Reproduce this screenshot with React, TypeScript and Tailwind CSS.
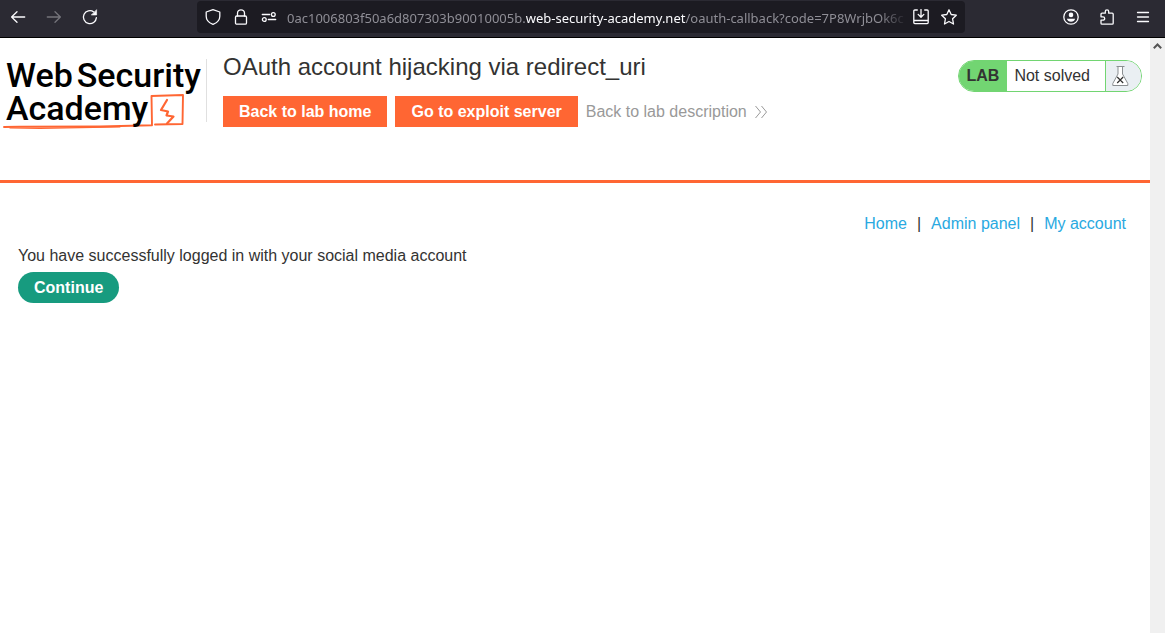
import type { ReactNode } from "react";

function Icon({ size = 16, children }: { size?: number; children: ReactNode }) {
  return (
    <svg
      width={size}
      height={size}
      viewBox="0 0 16 16"
      fill="none"
      stroke="currentColor"
      strokeWidth="1.3"
      strokeLinecap="round"
      strokeLinejoin="round"
      aria-hidden="true"
      className="block"
    >
      {children}
    </svg>
  );
}

function ToolButton({ label, children, disabled }: { label: string; children: ReactNode; disabled?: boolean }) {
  return (
    <button
      type="button"
      aria-label={label}
      disabled={disabled}
      className="flex size-5 shrink-0 items-center justify-center text-[#fbfbfe] disabled:text-[#75747b]"
    >
      {children}
    </button>
  );
}

function BrowserBar() {
  return (
    <div className="flex h-[38px] shrink-0 items-start border-b border-black bg-[#2b2a33] pt-px">
      <div className="flex h-8 w-[197px] shrink-0 items-center gap-4 pl-2">
        <ToolButton label="Back">
          <Icon>
            <path d="M14.7 8H1.6M7 2.8 1.6 8 7 13.2" />
          </Icon>
        </ToolButton>
        <ToolButton label="Forward" disabled>
          <Icon>
            <path d="M1.3 8h13.1M9 2.8 14.4 8 9 13.2" />
          </Icon>
        </ToolButton>
        <ToolButton label="Reload">
          <Icon>
            <path d="M14.4 8.6A6.5 6.5 0 1 1 11.8 2.9" />
            <path d="M14.6 1v5H9.6Z" fill="currentColor" strokeWidth="0.6" />
          </Icon>
        </ToolButton>
      </div>
      <div className="flex h-8 min-w-0 flex-1 items-center rounded bg-[#1c1b22] pr-[6px] pl-[6px]">
        <div className="flex shrink-0 items-center gap-2">
          <ToolButton label="Tracking protection">
            <Icon>
              <path d="M8 .7 14.8 3v4.2c0 3.6-2.8 6.6-6.8 8.2-4-1.6-6.8-4.600-6.800-8.200V3Z" />
            </Icon>
          </ToolButton>
          <ToolButton label="Connection is secure">
            <Icon>
              <rect x="2.500" y="7" width="11" height="8.200" rx="1.300" />
              <path d="M4.500 7V4.300a3.500 3.500 0 0 1 7 0V7" />
            </Icon>
          </ToolButton>
          <ToolButton label="Site permissions">
            <Icon>
              <path d="M1.300 5.500h7.400M7.300 10.500h7.400" />
              <circle cx="12.300" cy="5.500" r="1.900" />
              <circle cx="3.300" cy="10.500" r="1.900" />
            </Icon>
          </ToolButton>
        </div>
        <div
          aria-label="Address"
          className="ml-2 min-w-0 flex-1 overflow-hidden mask-[linear-gradient(to_right,black_calc(100%-28px),transparent)] pt-[2px] font-['Noto_Sans',sans-serif] text-[13px] leading-5 whitespace-nowrap text-[#8f8e96]"
        >
          0ac1006803f50a6d807303b90010005b.<span className="text-[#fbfbfe]">web-security-academy.net</span>
          /oauth-callback?code=7P8WrjbOk6c
        </div>
        <div className="flex shrink-0 items-center gap-2 pl-1">
          <ToolButton label="Install site">
            <Icon>
              <path d="M4.300 1H1.800a1 1 0 0 0-1 1v11.600a1 1 0 0 0 1 1h12.400a1 1 0 0 0 1-1V2a1 1 0 0 0-1-1h-2.500M.8 11.500h14.400M8 .5v7.300M5.200 5.400 8 8.200l2.800-2.800" />
            </Icon>
          </ToolButton>
          <ToolButton label="Bookmark this page">
            <Icon>
              <path d="m8 .8 2.200 4.700 5.100.7-3.700 3.600.9 5.200L8 12.500 3.500 15l.9-5.200L.7 6.200l5.100-.7Z" />
            </Icon>
          </ToolButton>
        </div>
      </div>
      <div className="flex h-8 w-[200px] shrink-0 items-center justify-end gap-4 pr-3">
        <ToolButton label="Account">
          <Icon>
            <circle cx="8" cy="8" r="7.200" />
            <circle cx="8" cy="5.900" r="2.300" fill="currentColor" stroke="none" />
            <path d="M3.900 9.800h8.200c-.4 2-2 3-4.100 3s-3.700-1-4.100-3Z" fill="currentColor" stroke="none" />
          </Icon>
        </ToolButton>
        <ToolButton label="Extensions">
          <Icon>
            <path d="M2 7.500V5.200a1 1 0 0 1 1-1h3.300V2.500a1.700 1.700 0 0 1 3.400 0v1.700h3.500a1 1 0 0 1 1 1v9a1 1 0 0 1-1 1H3a1 1 0 0 1-1-1v-3h2a1.700 1.700 0 0 0 0-3.400H2Z" />
          </Icon>
        </ToolButton>
        <ToolButton label="Menu">
          <Icon>
            <path d="M2.500 3.500h11M2.500 8h11M2.500 12.500h11" />
          </Icon>
        </ToolButton>
      </div>
    </div>
  );
}

function Logo() {
  return (
    <a
      href="#academy"
      className="relative block h-[72px] w-[206px] shrink-0 pl-[6px] font-['Roboto',sans-serif] text-[34px] leading-[33px] font-medium text-black"
    >
      <svg
        viewBox="0 0 206 72"
        className="absolute inset-0 h-[72px] w-[206px]"
        fill="none"
        stroke="#ff6633"
        strokeLinecap="round"
        strokeLinejoin="round"
        aria-hidden="true"
      >
        <path d="M4 68 20 67.800 100 67.500 152 66.300 151.500 37 183 36 182.500 65 155 65.500" strokeWidth="1.900" />
        <path d="M10 69 40 69.300 120 67.800" strokeWidth="1.200" />
        <path d="M167 41 161 51 168 52.500 166.500 56.500 173.500 57.500 167 64.500" strokeWidth="2.200" />
      </svg>
      <span className="relative flex gap-1">
        <span>Web</span>
        <span>Security</span>
      </span>
      <span className="relative block">Academy</span>
    </a>
  );
}

function LabStatus() {
  return (
    <div className="mt-px flex h-8 shrink-0 overflow-hidden rounded-full border border-[#72d572] bg-white text-base leading-[30px]">
      <span className="bg-[#72d572] px-2 font-bold">LAB</span>
      <span className="pr-[15px] pl-[7px]">Not solved</span>
      <span className="flex w-9 items-center border-l border-[#72d572] bg-[#eaeff3] pl-[6px]">
        <svg width="17" height="22" viewBox="0 0 17 22" fill="none" stroke="#8a8e91" aria-hidden="true">
          <path d="M6 2v7L.8 18.500V20.500H15.800V18.500L10.500 9V2" fill="#fff" />
          <path d="M4.500 1.500h8" />
          <path d="m5.200 12 6 6M11.200 12l-6 6" stroke="#333332" strokeWidth="1.200" />
        </svg>
      </span>
    </div>
  );
}

function LabHeader() {
  return (
    <header className="flex h-[145px] items-start border-b-3 border-[#ff6633] pt-[21px] pr-2">
      <Logo />
      <div className="h-[63px] border-l border-[#e0e0e0]" />
      <div className="-mt-2 min-w-0 flex-1 pl-4">
        <h2 className="text-2xl leading-8">OAuth account hijacking via redirect_uri</h2>
        <div className="mt-[13px] flex items-center gap-2 leading-[31px]">
          <a href="#lab-home" className="bg-[#ff6633] px-4 font-bold text-white">
            Back to lab home
          </a>
          <a href="#exploit-server" className="bg-[#ff6633] px-4 font-bold text-white">
            Go to exploit server
          </a>
          <a href="#description" className="flex items-center gap-[7px] text-[#999999]">
            Back to lab description
            <svg width="14" height="14" viewBox="0 0 14 14" fill="none" stroke="#999999" aria-hidden="true">
              <path d="m1.500 1 5 6-5 6M7.500 1l5 6-5 6" />
            </svg>
          </a>
        </div>
      </div>
      <LabStatus />
    </header>
  );
}

const links = ["Home", "Admin panel", "My account"];

export default function App() {
  return (
    <div className="flex min-h-screen flex-col bg-white font-['Liberation_Sans',Arial,sans-serif] text-base text-[#333332]">
      <BrowserBar />
      <div className="flex flex-1">
        <main className="min-w-0 flex-1">
          <LabHeader />
          <nav className="flex justify-end pt-[29px] pr-6 leading-6">
            {links.map((link, i) => (
              <span key={link} className="flex">
                {i > 0 && <span className="px-[10px]">|</span>}
                <a href={"#" + link.toLowerCase().replace(" ", "-")} className="text-[#29a9e1]">
                  {link}
                </a>
              </span>
            ))}
          </nav>
          <section className="flex flex-col items-start gap-1 px-[18px] pt-2">
            <p className="leading-6">You have successfully logged in with your social media account</p>
            <button type="button" className="rounded-full bg-[#179b7f] px-4 leading-[31px] font-bold text-white">
              Continue
            </button>
          </section>
        </main>
        <div className="flex w-[15px] shrink-0 justify-center bg-[#f0f0f0] pt-[5px]">
          <svg width="9" height="6" viewBox="0 0 9 6" fill="none" stroke="#555" strokeWidth="2" aria-hidden="true">
            <path d="M.8 5.200 4.500 1.500l3.700 3.700" />
          </svg>
        </div>
      </div>
    </div>
  );
}
